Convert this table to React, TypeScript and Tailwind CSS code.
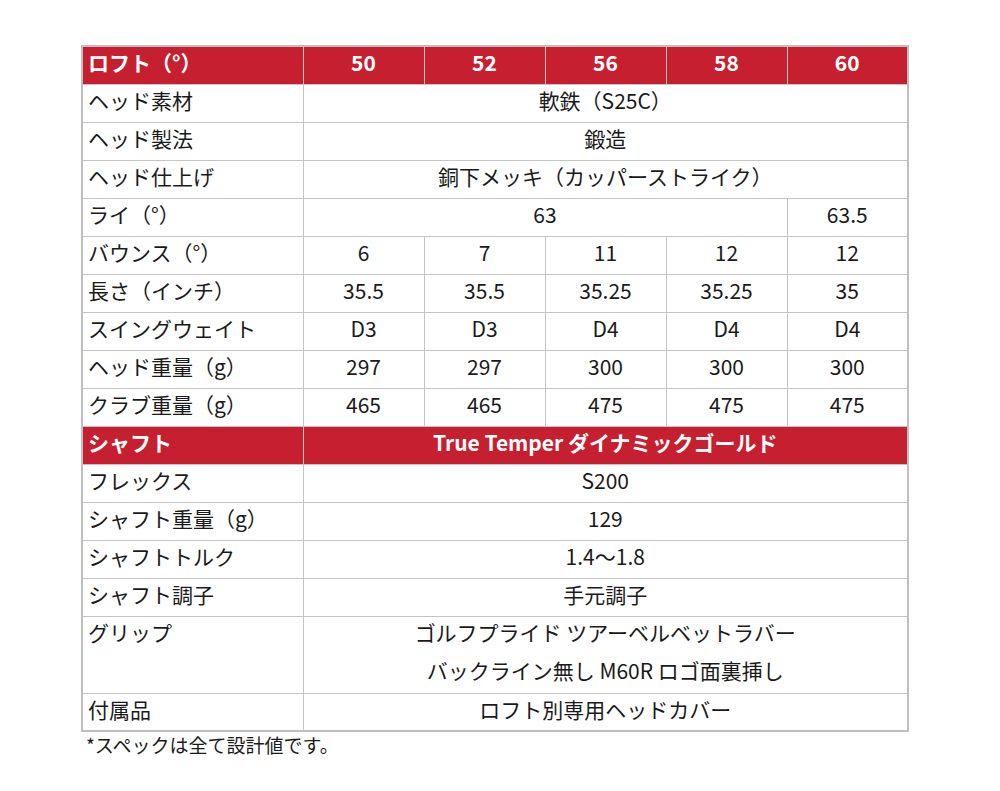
const font = { fontFamily: '"Noto Sans CJK JP", "Noto Sans", sans-serif' };

type Row = { label: string; cells: { text: string | string[]; span?: number }[] };

const headRows: Row[] = [
  { label: "ヘッド素材", cells: [{ text: "軟鉄（S25C）", span: 5 }] },
  { label: "ヘッド製法", cells: [{ text: "鍛造", span: 5 }] },
  { label: "ヘッド仕上げ", cells: [{ text: "銅下メッキ（カッパーストライク）", span: 5 }] },
  { label: "ライ（°）", cells: [{ text: "63", span: 4 }, { text: "63.5" }] },
  { label: "バウンス（°）", cells: ["6", "7", "11", "12", "12"].map((t) => ({ text: t })) },
  { label: "長さ（インチ）", cells: ["35.5", "35.5", "35.25", "35.25", "35"].map((t) => ({ text: t })) },
  { label: "スイングウェイト", cells: ["D3", "D3", "D4", "D4", "D4"].map((t) => ({ text: t })) },
  { label: "ヘッド重量（g）", cells: ["297", "297", "300", "300", "300"].map((t) => ({ text: t })) },
  { label: "クラブ重量（g）", cells: ["465", "465", "475", "475", "475"].map((t) => ({ text: t })) },
];

const shaftRows: Row[] = [
  { label: "フレックス", cells: [{ text: "S200", span: 5 }] },
  { label: "シャフト重量（g）", cells: [{ text: "129", span: 5 }] },
  { label: "シャフトトルク", cells: [{ text: "1.4～1.8", span: 5 }] },
  { label: "シャフト調子", cells: [{ text: "手元調子", span: 5 }] },
  {
    label: "グリップ",
    cells: [{ text: ["ゴルフプライド ツアーベルベットラバー", "バックライン無し M60R ロゴ面裏挿し"], span: 5 }],
  },
  { label: "付属品", cells: [{ text: "ロフト別専用ヘッドカバー", span: 5 }] },
];

const td = "border border-[#c4c4c4] h-[38px] p-0 pb-[6px] leading-[30px]";

function BodyRow({ row }: { row: Row }) {
  const multi = row.cells.some((c) => Array.isArray(c.text));
  return (
    <tr>
      <td className={`${td} ${multi ? "align-top" : ""} pl-[5px] text-left`}>{row.label}</td>
      {row.cells.map((c, i) => (
        <td key={i} colSpan={c.span ?? 1} className={`${td} text-center`}>
          {Array.isArray(c.text)
            ? c.text.map((line, j) => (
                <div key={line} className={j === 0 ? "h-[38px] leading-[30px]" : "h-[32px] leading-[30px]"}>
                  {line}
                </div>
              ))
            : c.text}
        </td>
      ))}
    </tr>
  );
}

function HeaderRow({ label, cells }: { label: string; cells: { text: string; span?: number }[] }) {
  const th =
    "border border-[#c4c4c4] bg-[#c62030] text-white font-bold h-[38px] p-0 pb-[6px] leading-[30px]";
  return (
    <tr>
      <td className={`${th} text-left pl-[5px]`}>{label}</td>
      {cells.map((c, i) => (
        <td key={i} colSpan={c.span ?? 1} className={`${th} text-center`}>
          {c.text}
        </td>
      ))}
    </tr>
  );
}

export default function App() {
  return (
    <div className="w-[1000px] h-[791px] bg-white pt-[45px] pl-[81px] text-[#1a1a1a]" style={font}>
      <table className="border-collapse border-2 border-[#bfbfbf] w-[827px] table-fixed text-[21px]">
        <colgroup>
          <col className="w-[221px]" />
          <col className="w-[121px]" />
          <col className="w-[121px]" />
          <col className="w-[121px]" />
          <col className="w-[121px]" />
          <col className="w-[121px]" />
        </colgroup>
        <tbody>
          <HeaderRow label="ロフト（°）" cells={["50", "52", "56", "58", "60"].map((t) => ({ text: t }))} />
          {headRows.map((r) => (
            <BodyRow key={r.label} row={r} />
          ))}
          <HeaderRow label="シャフト" cells={[{ text: "True Temper ダイナミックゴールド", span: 5 }]} />
          {shaftRows.map((r) => (
            <BodyRow key={r.label} row={r} />
          ))}
        </tbody>
      </table>
      <p className="text-[19px] leading-[26px] pl-[5px] text-[#1a1a1a]">*スペックは全て設計値です。</p>
    </div>
  );
}
